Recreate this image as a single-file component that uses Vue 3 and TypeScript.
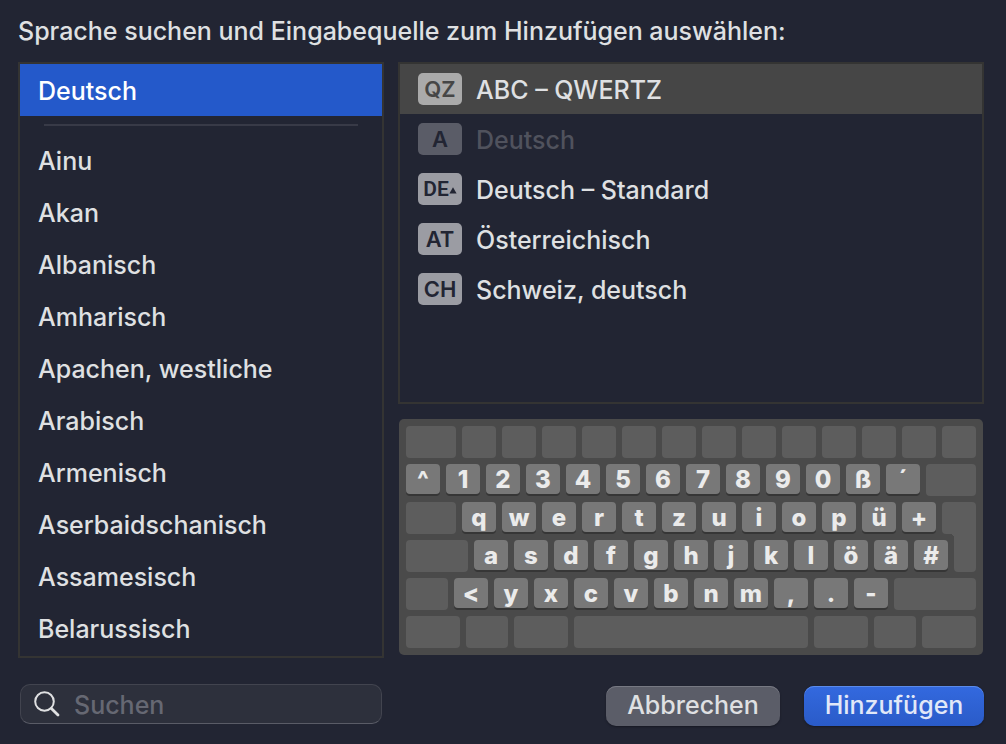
<script setup lang="ts">
import { ref } from 'vue'

interface Source {
  code: string
  name: string
  disabled?: boolean
  narrow?: boolean
}

interface Key {
  size: number
  label?: string
  shape?: string
}

const languages: string[] = [
  'Ainu', 'Akan', 'Albanisch', 'Amharisch', 'Apachen, westliche',
  'Arabisch', 'Armenisch', 'Aserbaidschanisch', 'Assamesisch', 'Belarussisch',
]

const sources: Source[] = [
  { code: 'QZ', name: 'ABC – QWERTZ' },
  { code: 'A', name: 'Deutsch', disabled: true },
  { code: 'DE', name: 'Deutsch – Standard', narrow: true },
  { code: 'AT', name: 'Österreichisch' },
  { code: 'CH', name: 'Schweiz, deutsch' },
]

const blank = (size: number, shape?: string): Key => ({ size, shape })
const typed = (labels: string): Key[] => [...labels].map((label) => ({ size: 34, label }))

const rows: Key[][] = [
  [blank(50), ...Array.from({ length: 13 }, () => blank(34))],
  [...typed('^1234567890ß´'), blank(50)],
  [blank(50), ...typed('qwertzuiopü+'), blank(34, 'enter-top')],
  [blank(62), ...typed('asdfghjklöä#'), blank(22, 'enter-bottom')],
  [blank(42), ...typed('<yxcvbnm,.-'), blank(82)],
  [54, 42, 54, 234, 54, 42, 54].map((size) => blank(size)),
]

const language = ref('Deutsch')
const source = ref('QZ')
const query = ref('')
</script>

<template>
  <main class="dialog">
    <h1 class="title">Sprache suchen und Eingabequelle zum Hinzufügen auswählen:</h1>

    <div class="columns">
      <ul class="panel languages">
        <li>
          <button type="button" class="language" :class="{ selected: language === 'Deutsch' }" @click="language = 'Deutsch'">Deutsch</button>
        </li>
        <li class="separator" role="separator"></li>
        <li v-for="name in languages" :key="name">
          <button type="button" class="language" :class="{ selected: language === name }" @click="language = name">{{ name }}</button>
        </li>
      </ul>

      <div class="details">
        <ul class="panel sources">
          <li v-for="item in sources" :key="item.code">
            <button
              type="button"
              class="source"
              :class="{ selected: source === item.code }"
              :disabled="item.disabled"
              @click="source = item.code"
            >
              <span class="badge" :class="{ narrow: item.narrow }">
                {{ item.code }}
                <svg v-if="item.narrow" width="8" height="7" viewBox="0 0 8 7" aria-hidden="true"><path d="M4 0.2 7.6 6.6H0.4z" fill="currentColor" /></svg>
              </span>
              <span class="name">{{ item.name }}</span>
            </button>
          </li>
        </ul>

        <div class="keyboard">
          <div v-for="(row, r) in rows" :key="r" class="row">
            <span
              v-for="(key, k) in row"
              :key="k"
              class="key"
              :class="[key.label ? 'typed' : 'blank', key.shape]"
              :style="{ flexGrow: key.size }"
            >{{ key.label }}</span>
          </div>
        </div>
      </div>
    </div>

    <footer class="footer">
      <label class="search">
        <svg class="glass" width="26" height="26" viewBox="0 0 26 26" fill="none" stroke="currentColor" aria-hidden="true">
          <circle cx="10.5" cy="10.5" r="9.3" stroke-width="2" />
          <path d="M17.4 17.4 24 24" stroke-width="2.8" stroke-linecap="round" />
        </svg>
        <input v-model="query" type="text" placeholder="Suchen" aria-label="Suchen" />
      </label>
      <div class="actions">
        <button type="button" class="action cancel">Abbrechen</button>
        <button type="button" class="action confirm">Hinzufügen</button>
      </div>
    </footer>
  </main>
</template>

<style>
body {
  background: #222533;
}
</style>

<style scoped>
.dialog {
  box-sizing: border-box;
  min-height: 100vh;
  padding: 14px 22px 18px 18px;
  border-bottom: 1px solid #211a2b;
  background: #222533;
  color: #dfe0e2;
  font-family: Inter, "Liberation Sans", sans-serif;
  font-size: 25px;
  font-weight: 500;
  line-height: 34px;
}

button,
input {
  margin: 0;
  border: 0;
  background: none;
  color: inherit;
  font: inherit;
}

.title {
  margin: 0 0 14px;
  font-size: 25px;
  font-weight: 500;
}

.columns {
  display: grid;
  grid-template-columns: 366fr 586fr;
  gap: 14px;
}

.panel {
  box-sizing: border-box;
  margin: 0;
  padding: 0;
  border: 2px solid #343433;
  list-style: none;
}

.languages {
  padding-bottom: 2px;
}

.language {
  display: block;
  width: 100%;
  height: 52px;
  padding: 2px 18px 0;
  text-align: left;
}

.language.selected {
  background: #2459ca;
  color: #fff;
}

.separator {
  height: 2px;
  margin: 8px 24px;
  background: #383a47;
}

.details {
  display: flex;
  flex-direction: column;
  gap: 15px;
  padding-bottom: 3px;
}

.sources {
  flex: 1;
}

.source {
  display: flex;
  align-items: center;
  gap: 14px;
  width: 100%;
  height: 50px;
  padding: 0 18px;
  text-align: left;
}

.source.selected {
  background: #464646;
}

.source:disabled {
  color: #50525d;
}

.name {
  padding-top: 2px;
}

.badge {
  display: flex;
  align-items: center;
  justify-content: center;
  width: 44px;
  height: 32px;
  border-radius: 5px;
  background: #9b9ca3;
  color: #222533;
  font-size: 22px;
  font-weight: 600;
}

.selected .badge {
  background: #aaa;
  color: #464646;
}

.source:disabled .badge {
  background: #5a5c67;
}

.badge.narrow {
  font-family: Roboto, "Liberation Sans", sans-serif;
  font-size: 21px;
}

.narrow svg {
  margin-top: 2px;
}

.keyboard {
  display: flex;
  flex-direction: column;
  gap: 6px;
  margin: 0 1px;
  padding: 7px;
  border-radius: 5px;
  background: #4a4a4a;
}

.row {
  display: flex;
  gap: 6px;
  height: 32px;
}

.key {
  flex: 1 1 0;
  min-width: 0;
  border-radius: 4px;
}

.blank {
  background: #5d5d5d;
}

.typed {
  height: 30px;
  background: #787878;
  box-shadow: 0 2px 0 #363636;
  color: #ebebeb;
  font-size: 24px;
  font-weight: 800;
  line-height: 31px;
  text-align: center;
}

.enter-top {
  border-bottom-right-radius: 0;
}

.enter-bottom {
  position: relative;
  margin-top: -6px;
  border-radius: 0 0 4px 4px;
}

.enter-bottom::before {
  content: "";
  position: absolute;
  top: 0;
  left: -4px;
  width: 4px;
  height: 4px;
  background: radial-gradient(circle at 0 100%, transparent 4px, #5d5d5d 4px);
}

.footer {
  display: flex;
  justify-content: space-between;
  align-items: flex-start;
  margin-top: 26px;
}

.search {
  box-sizing: border-box;
  display: flex;
  align-items: center;
  gap: 14px;
  width: 38%;
  max-width: 362px;
  height: 40px;
  margin-left: 2px;
  padding: 0 13px;
  border: 1px solid #42444f;
  border-bottom-color: #5a5c67;
  border-radius: 10px;
  background: #2d303c;
}

.glass {
  flex: none;
}

.search input {
  flex: 1;
  min-width: 0;
  height: 34px;
  padding: 2px 0 0;
  outline: 0;
}

.search input::placeholder {
  color: #666873;
  opacity: 1;
}

.actions {
  display: flex;
  gap: 24px;
  margin-top: 2px;
}

.action {
  height: 40px;
  padding: 0 16px 2px;
  border-radius: 10px;
  line-height: 38px;
}

.cancel {
  min-width: 174px;
  background: #5b5d68;
  box-shadow: inset 0 1px 0 #777983, 0 1px 2px #171923;
}

.confirm {
  min-width: 180px;
  background: linear-gradient(#3369df, #2a5bc8);
  box-shadow: inset 0 1px 0 #5b8bea, 0 1px 2px #171923;
  color: #e1e8f8;
}
</style>
